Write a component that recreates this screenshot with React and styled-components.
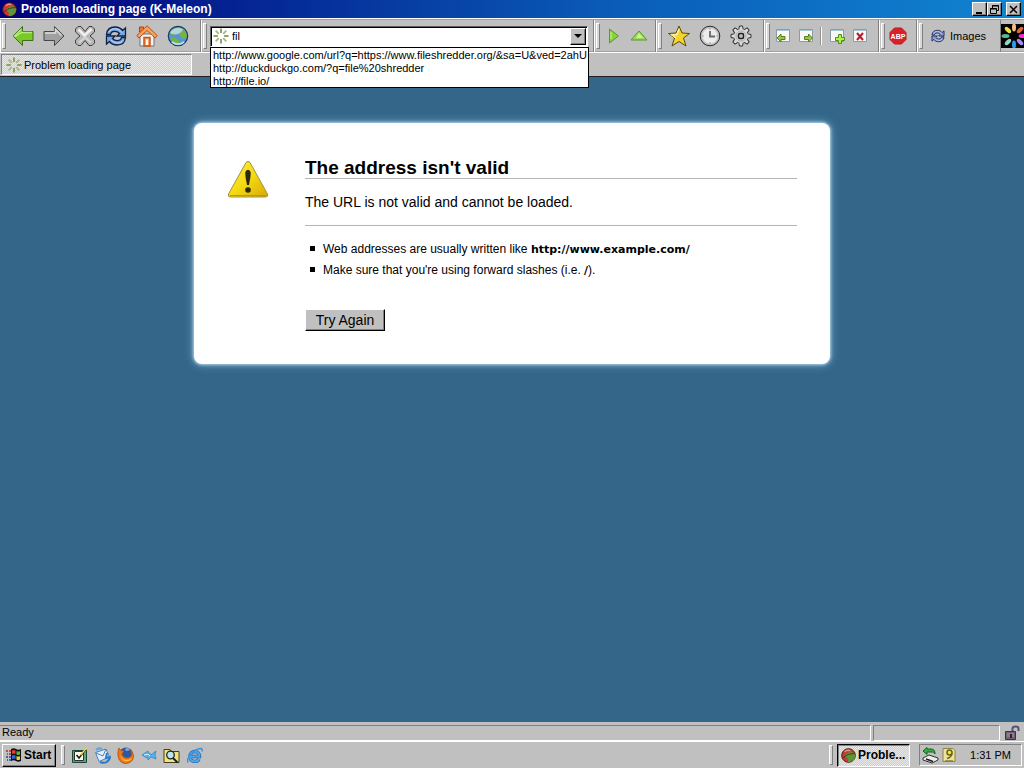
import React, { useState } from 'react';
import styled, { createGlobalStyle, css } from 'styled-components';

const Global = createGlobalStyle`
  *, *::before, *::after { box-sizing: border-box; }
  body { margin: 0; background: #336688; }
  body, button, input {
    font-family: "Liberation Sans", Arial, sans-serif;
    font-size: 11px;
    color: #000;
  }
`;

const raised = css`
  border: 1px solid;
  border-color: #fff #000 #000 #fff;
  box-shadow: inset -1px -1px #808080;
`;

const dither = css`
  background: repeating-conic-gradient(#e8e8e8 0 25%, #cecece 0 50%) 0 0 / 2px 2px;
`;

const Window = styled.div`
  display: flex;
  flex-direction: column;
  min-height: 100vh;
  background: #c0c0c0;
`;

const TitleBar = styled.header`
  display: flex;
  align-items: center;
  gap: 4px;
  height: 18px;
  padding: 0 3px 0 2px;
  background: linear-gradient(to right, #00007c, #0a5cb8 60%, #1084d0);
`;

const Title = styled.h1`
  flex: 1;
  margin: 0;
  color: #fff;
  font-size: 12px;
  line-height: 18px;
  font-weight: bold;
`;

const WindowControls = styled.div`
  display: flex;
`;

const CaptionButton = styled.button`
  ${raised}
  display: flex;
  width: 15px;
  height: 14px;
  padding: 1px;
  margin-left: ${(p) => (p.$apart ? '4px' : 0)};
  background: #c0c0c0;
`;

const Rebar = styled.div`
  display: flex;
  height: 35px;
  padding-top: 1px;
  border-top: 1px solid #fff;
  border-bottom: 1px solid #fff;
  box-shadow: inset 0 1px #a0a0a0, inset 0 -1px #a0a0a0;
`;

const Band = styled.div`
  display: flex;
  align-items: center;
  flex: ${(p) => (p.$grow ? '1 1 0' : '0 0 auto')};
  min-width: 0;
  padding-right: ${(p) => p.$end ?? 7}px;
  border-right: 1px solid #808080;
  box-shadow: inset 1px 0 #fff;
`;

const Grip = styled.span`
  flex: none;
  width: 4px;
  height: ${(p) => p.$height ?? 26}px;
  margin: 0 1px 0 2px;
  border: 1px solid;
  border-color: #fff #808080 #808080 #fff;
  background: #d8d8d8;
`;

const ToolButton = styled.button`
  display: flex;
  align-items: center;
  justify-content: center;
  gap: 5px;
  width: ${(p) => (p.$width ? `${p.$width}px` : 'auto')};
  height: 26px;
  padding: 0;
  border: 0;
  background: none;
  line-height: 14px;
`;

const Divider = styled.span`
  width: 2px;
  height: 18px;
  margin: 0 3px;
  border-left: 1px solid #909090;
  border-right: 1px solid #fff;
`;

const Throbber = styled.div`
  display: flex;
  align-items: center;
  width: 23px;
  overflow: hidden;
`;

const ComboBox = styled.div`
  position: relative;
  display: flex;
  align-items: center;
  flex: 1;
  min-width: 0;
  height: 21px;
  margin-left: 2px;
  padding: 1px 1px 1px 2px;
  gap: 3px;
  border: 1px solid;
  border-color: #606060 #fff #fff #606060;
  box-shadow: inset 1px 1px #000;
  background: #fff;
`;

const AddressInput = styled.input`
  flex: 1;
  min-width: 0;
  height: 16px;
  padding: 0;
  border: 0;
  outline: 0;
  background: transparent;
`;

const DropButton = styled.button`
  ${raised}
  display: flex;
  align-items: center;
  justify-content: center;
  width: 16px;
  height: 17px;
  padding: 0;
  background: #c0c0c0;
`;

const Suggestions = styled.ul`
  position: absolute;
  z-index: 2;
  top: 20px;
  left: -1px;
  right: -2px;
  margin: 0;
  padding: 0 0 0 2px;
  border: 1px solid #000;
  background: #fff;
  list-style: none;
`;

const Suggestion = styled.li`
  height: 13px;
  line-height: 14px;
  white-space: nowrap;
`;

const TabBar = styled.nav`
  display: flex;
  height: 24px;
  padding: 1px 1px 1px;
  border-bottom: 1px solid #202020;
`;

const Tab = styled.button`
  ${dither}
  display: flex;
  align-items: center;
  gap: 2px;
  width: 191px;
  padding: 0 4px;
  border: 1px solid;
  border-color: #808080 #fff #fff #808080;
  text-align: left;
`;

const Page = styled.main`
  flex: 1;
  padding: 46px 24px;
  background: #336688;
`;

const Card = styled.section`
  display: flex;
  gap: 36px;
  max-width: 636px;
  margin: 0 auto;
  padding: 35px 33px 33px;
  border-radius: 8px;
  background: #fff;
  box-shadow: 0 0 3px 1px #b4d0e4, 0 0 8px 2px #5c94bc;
`;

const Message = styled.div`
  flex: 1;
  min-width: 0;
`;

const Heading = styled.h2`
  margin: 0;
  border-bottom: 1px solid #b4b4b4;
  font-size: 19px;
  line-height: 20px;
`;

const Summary = styled.p`
  margin: 0;
  padding: 14px 0;
  border-bottom: 1px solid #b4b4b4;
  font-size: 14px;
  line-height: 18px;
`;

const Hints = styled.ul`
  margin: 13px 0 28px;
  padding: 0 0 0 18px;
  list-style: none;
  font-size: 12px;
  line-height: 21px;
`;

const Hint = styled.li`
  position: relative;
  &::before {
    content: '';
    position: absolute;
    left: -13px;
    top: 7px;
    width: 5px;
    height: 5px;
    background: #000;
  }
`;

const Strong = styled.b`
  font-family: "DejaVu Sans", sans-serif;
  font-size: 11px;
`;

const RetryButton = styled.button`
  ${raised}
  width: 80px;
  height: 22px;
  padding: 0;
  background: #c0c0c0;
  font-size: 14px;
  line-height: 18px;
`;

const StatusBar = styled.footer`
  display: flex;
  align-items: center;
  gap: 2px;
  height: 19px;
  padding: 2px 2px 0 0;
`;

const Pane = styled.div`
  flex: ${(p) => (p.$width ? `0 0 ${p.$width}px` : '1')};
  height: 16px;
  padding-left: 2px;
  border: 1px solid;
  border-color: #808080 #fff #fff #808080;
  border-left-width: ${(p) => (p.$width ? '1px' : 0)};
  line-height: 13px;
`;

const LockSlot = styled.div`
  display: flex;
  width: 20px;
  justify-content: center;
`;

const TaskBar = styled.div`
  display: flex;
  align-items: center;
  height: 27px;
  padding: 0 2px;
  border-top: 1px solid #fff;
`;

const StartButton = styled.button`
  ${raised}
  display: flex;
  align-items: center;
  gap: 2px;
  width: 54px;
  height: 23px;
  margin-right: 3px;
  padding: 0 0 0 3px;
  background: #c0c0c0;
  font-size: 12px;
  font-weight: bold;
`;

const QuickLaunch = styled.div`
  display: flex;
  flex: 1;
  padding-left: 2px;
`;

const TaskButton = styled.button`
  ${dither}
  display: flex;
  align-items: center;
  gap: 2px;
  width: 73px;
  height: 23px;
  margin: 0 9px 0 3px;
  padding: 0 0 0 3px;
  border: 1px solid;
  border-color: #000 #fff #fff #000;
  box-shadow: inset 1px 1px #808080;
  font-size: 12px;
  font-weight: bold;
`;

const Tray = styled.div`
  display: flex;
  align-items: center;
  gap: 2px;
  width: 103px;
  height: 22px;
  padding: 0 10px 0 2px;
  border: 1px solid;
  border-color: #808080 #fff #fff #808080;
`;

const Clock = styled.time`
  margin-left: auto;
  font-size: 11px;
`;

const Svg = styled.svg`
  display: block;
  flex: none;
`;

const Icon = ({ size = 22, box = 22, children }) => (
  <Svg width={size} height={size} viewBox={`0 0 ${box} ${box}`} aria-hidden="true">
    {children}
  </Svg>
);

const BackIcon = () => (
  <Icon>
    <path d="M10.500 1.500 1 11l9.500 9.500V15.500h10.500v-9H10.500z" fill="#7cc82c" stroke="#3c6c1c" />
    <path d="M9.500 4 2.500 11l1 .5 6-4H20" fill="none" stroke="#b4ec78" strokeWidth="1.500" />
  </Icon>
);

const ForwardIcon = () => (
  <Icon>
    <path d="M11.500 1.500 21 11l-9.500 9.500v-5H1v-9h10.500z" fill="#a0a0a0" stroke="#484848" />
    <path d="M2 8h10.500V4.500L18.500 10.500" fill="none" stroke="#dcdcdc" strokeWidth="1.500" />
  </Icon>
);

const StopIcon = () => (
  <Icon>
    <path
      d="M4 1.500h3l4 5 4-5h3l2.500 2.500v3L16 11l4.500 4v3L18 20.500h-3l-4-5-4 5H4L1.500 18v-3L6 11 1.500 7V4z"
      fill="#b8b8b8"
      stroke="#404040"
    />
    <path d="m4.500 4.500 6 6 7-6.500" fill="none" stroke="#f0f0f0" strokeWidth="2.500" />
    <path d="m5 17.500 6-5 6 5" fill="none" stroke="#d4d4d4" strokeWidth="2" />
  </Icon>
);

const ReloadIcon = ({ size = 22, fill = '#78a8e0' }) => (
  <Icon size={size}>
    <path
      d="M1.500 9.500C2 4 6 2 10 2c3.500 0 6 1.500 7.500 3.500L20.500 3v8h-8.500l2.500-2.500C12 5.500 6 5.500 5.500 9.500z"
      fill={fill}
      stroke="#102048"
      strokeWidth="1.300"
    />
    <path
      d="M20.500 12.500C20 18 16 20 12 20c-3.500 0-6-1.500-7.500-3.500L1.500 19v-8h8.500l-2.500 2.500c2.500 3 8.500 3 9-1z"
      fill={fill}
      stroke="#102048"
      strokeWidth="1.300"
    />
    <path d="M4 7c2-4 9-5 13 .5M18 15.500c-2 3-8 4-12-.5" fill="none" stroke="#d0e4fc" strokeWidth=".8" />
  </Icon>
);

const HomeIcon = () => (
  <Icon>
    <path d="M4 9h14v12H4z" fill="#f4f4f4" stroke="#707070" />
    <path d="M3.500 2h4v5h-4z" fill="#e87c3c" stroke="#a04818" />
    <path d="M11 .8.8 10.500l2 2.500L11 5.500l8.200 7.500 2-2.500z" fill="#f8a458" stroke="#c04c14" />
    <path d="M8 12.500h6V21H8z" fill="#f0a068" stroke="#c85414" strokeWidth="1.500" />
    <path d="M10 14.500h2V20h-2z" fill="#fff" />
  </Icon>
);

const GlobeIcon = () => (
  <Icon>
    <circle cx="11" cy="11" r="9.700" fill="#5c94d0" stroke="#1c3c5c" strokeWidth="1.200" />
    <path d="M3 9c2-5 6-7 10-6l-1 3-4 2-1 3zM12 7l4-3c3 2 4 5 4 8l-4 2-3-3zM3.500 12l5 1 4 3-2 4c-4 0-6-4-7-8z" fill="#74b444" />
    <path d="M3 8c2-5 8-6 13-4-2 5-7 7-13 4z" fill="#c4e0f4" opacity=".8" />
    <path d="M5 17c4 3 8 3 12 0" fill="none" stroke="#b8e0f4" strokeWidth="2" />
  </Icon>
);

const SPOKES = [0, 45, 90, 135, 180, 225, 270, 315];

const SpinnerIcon = () => (
  <Icon size={16} box={18}>
    {SPOKES.map((a, i) => (
      <path
        key={a}
        d="M9 .5v5"
        stroke={i % 2 ? '#a4b87c' : '#84985c'}
        strokeWidth="2"
        transform={`rotate(${a} 9 9)`}
      />
    ))}
  </Icon>
);

const ThrobberIcon = () => (
  <Icon size={24} box={24}>
    <path d="M0 0h24v24H0z" fill="#000" />
    {['#f8c088', '#e8642c', '#f42cd4', '#a48cf0', '#2c9cf0', '#8cd8c8', '#58b890', '#e8e048'].map((c, i) => (
      <ellipse key={c} cx="13" cy="3.500" rx="2" ry="4" fill={c} transform={`rotate(${i * 45} 13 12)`} />
    ))}
  </Icon>
);

const MeleonIcon = () => (
  <Icon size={15} box={16}>
    <circle cx="8" cy="8" r="7.300" fill="#c83838" stroke="#3c1c14" />
    <path d="M4 8c2-3 6-5 11-2 1 5-2 9-8 9 1-3 0-5-3-7z" fill="#609434" />
    <path d="M2 11c3-4 8-5 13-5" fill="none" stroke="#28401c" />
    <path d="M4 4c2-2 4-2 6-1" fill="none" stroke="#f49080" strokeWidth="1.500" />
  </Icon>
);

const PlayIcon = () => (
  <Icon size={16} box={16}>
    <path d="m3.500 1 9 7-9 7z" fill="#88d43c" stroke="#5c9430" />
    <path d="M5 4v7" stroke="#c8f498" />
  </Icon>
);

const UpIcon = () => (
  <Icon size={18} box={18}>
    <path d="m9 4 8 9H1z" fill="#98dc54" stroke="#5c9430" />
    <path d="m9 6 4 5H6z" fill="#c8f498" />
  </Icon>
);

const StarIcon = () => (
  <Icon>
    <path d="m11 1 3 7 7.500.5-6 4.500 2.500 8-7-4.500L4 21l2.500-8-6-4.500L8 8z" fill="#f4d428" stroke="#5c4810" />
    <path d="m11 4-2 5.500-5 .5 4 3" fill="none" stroke="#fcf4a0" strokeWidth="1.500" />
  </Icon>
);

const ClockIcon = () => (
  <Icon>
    <circle cx="11" cy="11" r="9.800" fill="#bcbcbc" stroke="#2c2c2c" />
    <circle cx="11" cy="11" r="7.800" fill="#ececec" stroke="#d0d0d0" />
    <path d="M11 3v2M11 17v2M3 11h2M17 11h2" stroke="#a0a0a0" />
    <path d="M11 6v5.500h5" fill="none" stroke="#686868" strokeWidth="1.800" />
  </Icon>
);

const GearIcon = () => (
  <Icon>
    {SPOKES.map((a) => (
      <path key={a} d="M8.500 5.500 9.500 1h3l1 4.500z" fill="#dcdcdc" stroke="#303030" transform={`rotate(${a} 11 11)`} />
    ))}
    <circle cx="11" cy="11" r="7" fill="#d4d4d4" />
    <circle cx="11" cy="11" r="5" fill="none" stroke="#b0b0b0" />
    <rect x="8.500" y="8.500" width="5" height="5" rx="1.500" fill="#c0c0c0" stroke="#202020" strokeWidth="1.500" />
  </Icon>
);

const PageGlyph = ({ children }) => (
  <Icon size={16} box={16}>
    <path d="M1.500 1.500h13v12h-13z" fill="#f8f8f8" stroke="#8c9ca4" />
    <path d="M2 2.500h12" stroke="#a8c8d8" />
    {children}
  </Icon>
);

const TabPrevIcon = () => (
  <PageGlyph>
    <path d="m2 10 4-4v2.500h4v3H6V14z" fill="#9cc44c" stroke="#54801c" />
  </PageGlyph>
);

const TabNextIcon = () => (
  <PageGlyph>
    <path d="m14.500 10-4-4v2.500h-4v3h4V14z" fill="#9cc44c" stroke="#54801c" />
  </PageGlyph>
);

const TabAddIcon = () => (
  <PageGlyph>
    <path d="M9.500 6.500h3v3h3v3h-3v3h-3v-3h-3v-3h3z" fill="#b4f04c" stroke="#4c8c1c" />
  </PageGlyph>
);

const TabCloseIcon = () => (
  <PageGlyph>
    <path d="m5 5 6 7m0-7-6 7" stroke="#b41c2c" strokeWidth="2" />
  </PageGlyph>
);

const BlockIcon = () => (
  <Icon size={18} box={18}>
    <path d="M5.500 1h7L17 5.500v7L12.500 17h-7L1 12.500v-7z" fill="#dc2028" stroke="#b81820" />
    <text x="9" y="11.500" textAnchor="middle" fontFamily="Liberation Sans" fontWeight="bold" fontSize="7" fill="#fff">
      ABP
    </text>
  </Icon>
);

const WarningIcon = () => (
  <Svg width="42" height="40" viewBox="0 -2 42 40" role="img" aria-label="Warning">
    <defs>
      <linearGradient id="amber" x1="0" y1="0" x2="1" y2="1">
        <stop offset="0" stopColor="#f8ec50" />
        <stop offset=".5" stopColor="#f4dc10" />
        <stop offset="1" stopColor="#d8a808" />
      </linearGradient>
    </defs>
    <path
      d="M19 2.500q2-2.500 4 0L40.500 34q1 3-2 3h-35q-3 0-2-3z"
      fill="url(#amber)"
      stroke="#a8903c"
      strokeLinejoin="round"
    />
    <path d="M3 35.500h36" stroke="#b8902c" />
    <path d="M18.300 12q2.700-4.500 5.400 0c.3 5-1.200 9-1.700 13h-2c-.5-4-2-8-1.700-13z" fill="#30280c" />
    <circle cx="21" cy="30" r="2.800" fill="#30280c" />
  </Svg>
);

const LockIcon = () => (
  <Icon size={16} box={16}>
    <path d="M8.500 7V3.500q0-2 3-2t3 2V6" fill="none" stroke="#585070" strokeWidth="2" />
    <path d="M1.500 6.500h10v8h-10z" fill="#706078" stroke="#403040" />
    <path d="M3 9h7M3 11h7" stroke="#b09890" />
    <path d="M6 9h2v4H6z" fill="#302030" />
  </Icon>
);

const FlagIcon = () => (
  <Icon size={16} box={16}>
    <path d="M5 2q3-1.500 5 0t5 0v12q-3 1.500-5 0t-5 0z" fill="#101010" />
    <path d="M6 3.500q2-1 3.500 0V7Q8 6 6 7z" fill="#e83c2c" />
    <path d="M10.500 4q2 1 3.500 0v3.500q-2 1-3.500 0z" fill="#50b848" />
    <path d="M6 8.500q2-1 3.500 0V12q-1.500-1-3.500 0z" fill="#3468d8" />
    <path d="M10.500 9q2 1 3.500 0v3.500q-2 1-3.500 0z" fill="#f0d030" />
    <path d="M0 4h2m1 0h2M1 7h1m1 0h2" stroke="#c02820" strokeWidth="1.500" />
    <path d="M0 10h2m1 0h2M1 13h1m1 0h2" stroke="#2840b0" strokeWidth="1.500" />
  </Icon>
);

const DesktopIcon = () => (
  <Icon size={17} box={17}>
    <path d="M1.500 3.500h14v12h-14z" fill="#6c9c80" stroke="#184838" />
    <path d="M3.500 4.500h9v9h-9z" fill="#fcfcf0" stroke="#303030" />
    <path d="M5.500 8 8 11l7-9" fill="none" stroke="#181818" strokeWidth="1.500" />
    <path d="m9.500 8 6-7" stroke="#f4d848" strokeWidth="1.500" />
  </Icon>
);

const MailIcon = () => (
  <Icon size={17} box={17}>
    <path d="M1.500 5.500 12 2l3.500 8L5 14.500z" fill="#e4f0fc" stroke="#4c84bc" />
    <path d="m2 6 7 3 3-7" fill="none" stroke="#4c84bc" />
    <path d="M6 15c5 2 9 0 10-5l-4 1 1-5" fill="none" stroke="#2c78cc" strokeWidth="2" />
    <path d="M2 3c2-2 4-2 6-1" fill="none" stroke="#58a8e8" strokeWidth="2" />
  </Icon>
);

const FoxIcon = () => (
  <Icon size={18} box={18}>
    <circle cx="9" cy="8.500" r="7" fill="#2c58a8" />
    <path d="M2 2c0 2 2 2 5 3L5 8c1 4 6 5 9 2 1-2 0-4-1-6 6 4 4 13-4 13.500C2 18-1 9 2 2z" fill="#e87818" stroke="#a84410" strokeWidth=".7" />
    <path d="M3 8c1 5 6 8 12 4-2 5-11 5-12-4z" fill="#f8c048" />
    <path d="M8 3c2-1 4-1 5 1L9 5z" fill="#80b4e0" />
  </Icon>
);

const BirdIcon = () => (
  <Icon size={16} box={16}>
    <path d="m1 8 6-4v2c2 0 3 1 3 2l5-4-1 4 1 4-5-2-3 3v-2L4 10z" fill="#58b4ec" stroke="#2c84c4" strokeWidth=".8" />
    <path d="m3 8 4-1 2 2" fill="none" stroke="#d8f0fc" />
  </Icon>
);

const FindIcon = () => (
  <Icon size={17} box={17}>
    <path d="M1 2.500h6l1 2h8v11H1z" fill="#f4e480" stroke="#404020" />
    <circle cx="7.500" cy="8" r="3.800" fill="#b8e4f0" stroke="#202020" strokeWidth="1.300" />
    <path d="m10 11 4.500 4.500" stroke="#202020" strokeWidth="2" />
  </Icon>
);

const ExplorerIcon = () => (
  <Icon size={17} box={17}>
    <path d="M4.500 9.500h9C13.500 2.500 4 3 4 9.500c0 6 7.500 6 9 2.500" fill="none" stroke="#1c68b8" strokeWidth="3.400" />
    <path d="M4.500 9.500h9C13.500 2.500 4 3 4 9.500c0 6 7.500 6 9 2.500" fill="none" stroke="#50a8ec" strokeWidth="2" />
    <path d="M2.500 15.500C-1.500 13 8 2 14.500 1.500c2 0 2 1.500 1.500 3" fill="none" stroke="#3c94dc" strokeWidth="1.400" />
  </Icon>
);

const RemoveDeviceIcon = () => (
  <Icon size={17} box={17}>
    <path d="m1 11 6-3 9 3v2l-6 3-9-3z" fill="#ececec" stroke="#303030" />
    <path d="m4 12 7 2.500" stroke="#202020" strokeWidth="1.500" />
    <path d="m1 4 4-3.500V2h4c3 0 4 2 4 5-1-2-2-2-4-2H5v2.500z" fill="#38b040" stroke="#146420" />
  </Icon>
);

const MonitorIcon = () => (
  <Icon size={16} box={16}>
    <path d="M2 1.500h10l2 2v11H2z" fill="#ece49c" stroke="#8c843c" />
    <circle cx="8.500" cy="5.500" r="2.500" fill="#f4e838" stroke="#686020" strokeWidth="1.500" />
    <path d="M11 6q0 4-5 5.500" fill="none" stroke="#686020" strokeWidth="1.500" />
    <path d="M4 13.500h8" stroke="#a09848" />
  </Icon>
);

const NAV = [
  ['Back', BackIcon],
  ['Forward', ForwardIcon],
  ['Stop', StopIcon],
  ['Reload', ReloadIcon],
  ['Home', HomeIcon],
  ['Search the web', GlobeIcon],
];
const PLACES = [
  ['Bookmarks', StarIcon],
  ['History', ClockIcon],
  ['Preferences', GearIcon],
];
const LAUNCH = [
  ['Show desktop', DesktopIcon],
  ['Mail', MailIcon],
  ['Browser', FoxIcon],
  ['Messenger', BirdIcon],
  ['Find files', FindIcon],
  ['Internet', ExplorerIcon],
];
const URLS = [
  'http://www.google.com/url?q=https://www.fileshredder.org/&sa=U&ved=2ahU',
  'http://duckduckgo.com/?q=file%20shredder',
  'http://file.io/',
];

const Tools = ({ items, width }) =>
  items.map(([label, Glyph]) => (
    <ToolButton key={label} aria-label={label} $width={width}>
      <Glyph />
    </ToolButton>
  ));

export default function App() {
  const [address, setAddress] = useState('fil');
  return (
    <>
      <Global />
      <Window>
        <TitleBar>
          <MeleonIcon />
          <Title>Problem loading page (K-Meleon)</Title>
          <WindowControls>
            <CaptionButton aria-label="Minimize">
              <Icon size={11} box={11}><path d="M2 9h6" stroke="#000" strokeWidth="2" /></Icon>
            </CaptionButton>
            <CaptionButton aria-label="Restore">
              <Icon size={11} box={11}>
                <path d="M3.500 4V1.500h6v5H7.500M3 2h7M1.500 4.500h6v5h-6zM1 5h7" fill="none" stroke="#000" />
              </Icon>
            </CaptionButton>
            <CaptionButton aria-label="Close" $apart>
              <Icon size={11} box={11}><path d="m2 2 7 7m0-7-7 7" stroke="#000" strokeWidth="1.500" /></Icon>
            </CaptionButton>
          </WindowControls>
        </TitleBar>

        <Rebar>
          <Band>
            <Grip />
            <Tools items={NAV} width={31} />
          </Band>
          <Band $grow $end={5}>
            <Grip />
            <ComboBox>
              <SpinnerIcon />
              <AddressInput
                aria-label="Address"
                autoFocus
                value={address}
                onChange={(e) => setAddress(e.target.value)}
              />
              <DropButton aria-label="Show addresses">
                <Icon size={8} box={8}><path d="M0 2h8L4 6z" fill="#000" /></Icon>
              </DropButton>
              <Suggestions>
                {URLS.map((u) => (
                  <Suggestion key={u}>{u}</Suggestion>
                ))}
              </Suggestions>
            </ComboBox>
          </Band>
          <Band $end={4}>
            <Grip />
            <Tools items={[['Go', PlayIcon], ['Up', UpIcon]]} width={25} />
          </Band>
          <Band>
            <Grip />
            <Tools items={PLACES} width={31} />
          </Band>
          <Band>
            <Grip />
            <Tools items={[['Previous tab', TabPrevIcon], ['Next tab', TabNextIcon]]} width={23} />
            <Divider />
            <Tools items={[['New tab', TabAddIcon], ['Close tab', TabCloseIcon]]} width={23} />
          </Band>
          <Band>
            <Grip />
            <Tools items={[['Blocking', BlockIcon]]} width={23} />
          </Band>
          <Band>
            <Grip />
            <ToolButton $width={69}>
              <ReloadIcon size={14} fill="#8c9ce0" />
              Images
            </ToolButton>
          </Band>
          <Throbber>
            <ThrobberIcon />
          </Throbber>
        </Rebar>

        <TabBar>
          <Tab>
            <SpinnerIcon />
            Problem loading page
          </Tab>
        </TabBar>

        <Page>
          <Card>
            <WarningIcon />
            <Message>
              <Heading>The address isn't valid</Heading>
              <Summary>The URL is not valid and cannot be loaded.</Summary>
              <Hints>
                <Hint>
                  Web addresses are usually written like <Strong>http://www.example.com/</Strong>
                </Hint>
                <Hint>
                  Make sure that you're using forward slashes (i.e. <Strong>/</Strong>).
                </Hint>
              </Hints>
              <RetryButton>Try Again</RetryButton>
            </Message>
          </Card>
        </Page>

        <StatusBar>
          <Pane>Ready</Pane>
          <Pane $width={127} />
          <LockSlot>
            <LockIcon />
          </LockSlot>
        </StatusBar>

        <TaskBar>
          <StartButton>
            <FlagIcon />
            Start
          </StartButton>
          <Grip $height={20} />
          <QuickLaunch>
            <Tools items={LAUNCH} width={23} />
          </QuickLaunch>
          <Grip $height={20} />
          <TaskButton>
            <MeleonIcon />
            Proble...
          </TaskButton>
          <Tray>
            <RemoveDeviceIcon />
            <MonitorIcon />
            <Clock>1:31 PM</Clock>
          </Tray>
        </TaskBar>
      </Window>
    </>
  );
}
